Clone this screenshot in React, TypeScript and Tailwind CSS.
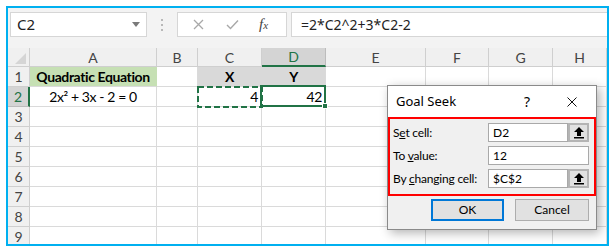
import React from 'react';

// Column widths of the sheet (row header first, then A..H)
const gridCols = 'grid-cols-[22px_127px_41px_64px_64px_100px_63px_64px_1fr]';
const columns = ['A', 'B', 'C', 'D', 'E', 'F', 'G', 'H'];
const rowNumbers = [1, 2, 3, 4, 5, 6, 7, 8, 9];

const UploadIcon: React.FC = () => (
  <svg width="12" height="13" viewBox="0 0 12 13">
    <path d="M6 1 L11 6 H8 V10 H4 V6 H1 Z" fill="#000" />
    <rect x="1" y="11" width="10" height="1.5" fill="#000" />
  </svg>
);

const CancelIcon: React.FC = () => (
  <svg width="11" height="11" viewBox="0 0 11 11">
    <path d="M1 1 L10 10 M10 1 L1 10" stroke="#a8a8a8" strokeWidth="1.3" fill="none" />
  </svg>
);

const CheckIcon: React.FC = () => (
  <svg width="13" height="11" viewBox="0 0 13 11">
    <path d="M1 6 L4.5 9.5 L12 1.5" stroke="#a8a8a8" strokeWidth="1.4" fill="none" />
  </svg>
);

const Cell: React.FC<{ row: number; col: string }> = ({ row, col }) => {
  const base = 'relative border-r border-b border-[#dadada] flex items-center text-[14px] tracking-[-0.4px] text-black';

  if (row === 1 && col === 'A') {
    return (
      <div className={`${base} justify-center bg-[#c6e0b4] border-r-[#c6e0b4] font-bold`}>
        Quadratic Equation
      </div>
    );
  }
  if (row === 1 && (col === 'C' || col === 'D')) {
    return (
      <div className={`${base} justify-center bg-[#d9d9d9] font-bold ${col === 'C' ? 'border-r-[#d9d9d9]' : ''}`}>
        {col === 'C' ? 'X' : 'Y'}
      </div>
    );
  }
  if (row === 2 && col === 'A') {
    return <div className={`${base} justify-center`}>2x² + 3x - 2 = 0</div>;
  }
  if (row === 2 && col === 'C') {
    return (
      <div className={`${base} justify-end pr-[3px]`}>
        4
        {/* copy marquee */}
        <svg className="absolute left-[-1px] top-[-1px] z-10" width="66" height="22" viewBox="0 0 66 22">
          <rect x="1" y="1" width="64" height="20" fill="none" stroke="#217346" strokeWidth="2" strokeDasharray="6 3" />
        </svg>
      </div>
    );
  }
  if (row === 2 && col === 'D') {
    return (
      <div className={`${base} justify-end pr-[3px]`}>
        42
        <div className="absolute left-[-2px] top-[-2px] right-[-1px] bottom-[-1px] border-2 border-[#217346] z-10" />
        <div className="absolute right-[-3px] bottom-[-3px] w-[6px] h-[6px] bg-[#217346] border border-white z-20" />
      </div>
    );
  }
  return <div className={base} />;
};

const App: React.FC = () => {
  return (
    <div className="w-[616px] h-[252px] bg-white p-[6px] font-['Lato',sans-serif]">
      <div className="relative w-[603px] h-[240px] border-2 border-[#00b0f0] overflow-hidden flex flex-col">
        {/* Formula bar */}
        <div className="h-[40px] shrink-0 bg-[#f3f3f3] flex items-start pt-[4px] pl-[2px]">
          <div className="w-[137px] h-[25px] bg-white border border-[#d6d6d6] flex items-center justify-between pl-[6px] pr-[6px]">
            <span className="text-[15px] text-[#222] font-['Noto_Sans',sans-serif]">C2</span>
            <svg width="8" height="5" viewBox="0 0 8 5">
              <path d="M0 0 H8 L4 5 Z" fill="#7a7a7a" />
            </svg>
          </div>
          <div className="w-[30px] h-[25px] flex flex-col items-center justify-center gap-[3px]">
            <span className="w-[2px] h-[2px] bg-[#b8b8b8]" />
            <span className="w-[2px] h-[2px] bg-[#b8b8b8]" />
            <span className="w-[2px] h-[2px] bg-[#b8b8b8]" />
          </div>
          <div className="w-[110px] h-[25px] bg-white border border-[#d6d6d6] flex items-center pl-[15px]">
            <CancelIcon />
            <span className="ml-[22px]"><CheckIcon /></span>
            <span className="ml-[20px] italic text-[15px] text-[#444] font-['Liberation_Serif',serif] leading-none">
              f<span className="text-[11px]">x</span>
            </span>
          </div>
          <div className="flex-1 ml-[4px] mr-[-2px] h-[25px] bg-white border border-[#d6d6d6] flex items-center pl-[9px]">
            <span className="text-[14px] text-[#222] font-['Noto_Sans',sans-serif]">=2*C2^2+3*C2-2</span>
          </div>
        </div>

        {/* Sheet */}
        <div className={`grid ${gridCols} grid-rows-[19px_repeat(9,20px)]`}>
          <div className="relative bg-[#f0f0f0] border-r border-b border-[#cfcfcf]">
            <svg className="absolute right-[3px] bottom-[2px]" width="11" height="11" viewBox="0 0 11 11">
              <path d="M11 0 V11 H0 Z" fill="#d5d5d5" />
            </svg>
          </div>
          {columns.map((c) => (
            <div
              key={c}
              className={
                c === 'D'
                  ? 'flex items-center justify-center bg-[#d4d4d4] border-r border-[#bcbcbc] border-b-2 border-b-[#217346] text-[14px] text-[#217346]'
                  : 'flex items-center justify-center bg-[#f0f0f0] border-r border-b border-[#cfcfcf] text-[14px] text-[#444]'
              }
            >
              {c}
            </div>
          ))}

          {rowNumbers.map((r) => (
            <React.Fragment key={r}>
              <div
                className={
                  r === 2
                    ? 'flex items-center justify-center bg-[#d4d4d4] border-b border-[#bcbcbc] border-r-2 border-r-[#217346] text-[14px] text-[#217346]'
                    : 'flex items-center justify-center bg-[#f0f0f0] border-r border-b border-[#cfcfcf] text-[14px] text-[#444]'
                }
              >
                {r}
              </div>
              {columns.map((c) => (
                <Cell key={c} row={r} col={c} />
              ))}
            </React.Fragment>
          ))}
        </div>

        {/* Goal Seek dialog */}
        <div className="absolute left-[379px] top-[77px] w-[210px] h-[145px] border border-[#8a8a8a] bg-[#f0f0f0] shadow-[3px_3px_10px_rgba(0,0,0,0.3)] flex flex-col text-[12px] text-black z-30">
          <div className="h-[31px] bg-white flex items-center pl-[8px]">
            <span className="text-[13px] font-['Noto_Sans',sans-serif]">Goal Seek</span>
            <span className="ml-auto mr-[37px] text-[14px] font-['Noto_Sans',sans-serif]">?</span>
            <svg className="mr-[19px]" width="10" height="10" viewBox="0 0 10 10">
              <path d="M0.5 0.5 L9.5 9.5 M9.5 0.5 L0.5 9.5" stroke="#111" strokeWidth="1" fill="none" />
            </svg>
          </div>
          <div className="border-2 border-[#ff0000] pt-[4px] pb-[6px] pl-[3px] pr-[5px] flex flex-col gap-[4px]">
            <div className="flex items-center h-[19px]">
              <span className="w-[95px] tracking-[-0.2px]">S<span className="underline">e</span>t cell:</span>
              <div className="flex-1 h-full bg-white border border-[#a9a9a9] flex items-center pl-[4px]">D2</div>
              <div className="w-[21px] h-full bg-[#e1e1e1] border-2 border-[#b4b4b4] flex items-center justify-center">
                <UploadIcon />
              </div>
            </div>
            <div className="flex items-center h-[19px]">
              <span className="w-[95px] tracking-[-0.2px]">To <span className="underline">v</span>alue:</span>
              <div className="flex-1 h-full bg-white border border-[#a9a9a9] flex items-center pl-[4px]">12</div>
            </div>
            <div className="flex items-center h-[19px]">
              <span className="w-[95px] tracking-[-0.2px]">By <span className="underline">c</span>hanging cell:</span>
              <div className="flex-1 h-full bg-white border border-[#a9a9a9] flex items-center pl-[4px]">$C$2</div>
              <div className="w-[21px] h-full bg-[#e1e1e1] border-2 border-[#b4b4b4] flex items-center justify-center">
                <UploadIcon />
              </div>
            </div>
          </div>
          <div className="flex justify-end gap-[11px] pr-[7px] pt-[3px]">
            <button className="w-[73px] h-[22px] bg-[#e1e1e1] border-2 border-[#0078d7] flex items-center justify-center">
              OK
            </button>
            <button className="w-[74px] h-[22px] bg-[#e1e1e1] border border-[#adadad] flex items-center justify-center">
              Cancel
            </button>
          </div>
        </div>
      </div>
    </div>
  );
};

export default App;
